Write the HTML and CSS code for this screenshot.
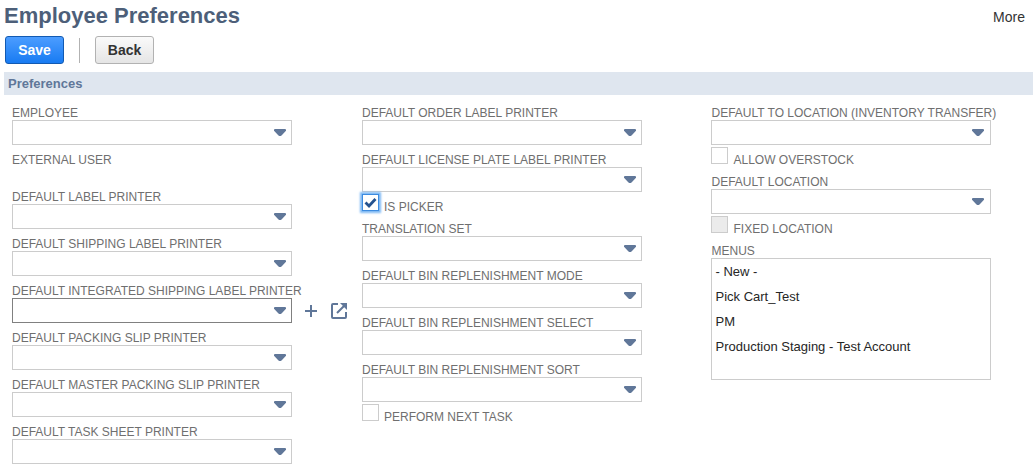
FILE: index.html
```html
<!DOCTYPE html>
<html lang="en">
<head>
<meta charset="utf-8">
<title>Employee Preferences</title>
<link rel="stylesheet" href="styles.css">
</head>
<body>
<svg class="defs" width="0" height="0"><symbol id="arrow" viewBox="0 0 12 7"><path d="M1 0h10q1 0 1 1v.8L7.500 6.500q-1.500 1-3 0L0 1.800V1Q0 0 1 0z" fill="#607799"/></symbol></svg>
<header class="header">
  <h1 class="title">Employee Preferences</h1>
  <a class="more">More</a>
</header>
<div class="actions">
  <button class="btn btn-primary">Save</button>
  <span class="divider"></span>
  <button class="btn">Back</button>
</div>
<h2 class="section">Preferences</h2>
<main class="columns">
  <div class="column">
    <div class="field"><span class="label">EMPLOYEE</span><div class="select"><svg class="arrow"><use href="#arrow"/></svg></div></div>
    <div class="field readonly"><span class="label">EXTERNAL USER</span></div>
    <div class="field"><span class="label">DEFAULT LABEL PRINTER</span><div class="select"><svg class="arrow"><use href="#arrow"/></svg></div></div>
    <div class="field"><span class="label">DEFAULT SHIPPING LABEL PRINTER</span><div class="select"><svg class="arrow"><use href="#arrow"/></svg></div></div>
    <div class="field"><span class="label">DEFAULT INTEGRATED SHIPPING LABEL PRINTER</span>
      <div class="row">
        <div class="select hovered"><svg class="arrow"><use href="#arrow"/></svg></div>
        <svg class="plus" width="12" height="12" viewBox="0 0 12 12"><path d="M6 0v12M0 6h12" stroke="#607799" stroke-width="2"/></svg>
        <svg class="open" width="16" height="16" viewBox="0 0 16 16" fill="none" stroke="#607799" stroke-width="2"><path d="M7 1H2Q1 1 1 2v12Q1 15 2 15h12q1 0 1-1V9M6 10l7-7"/><path d="M9 0H16v7z" fill="#607799" stroke="none"/></svg>
      </div>
    </div>
    <div class="field"><span class="label">DEFAULT PACKING SLIP PRINTER</span><div class="select"><svg class="arrow"><use href="#arrow"/></svg></div></div>
    <div class="field"><span class="label">DEFAULT MASTER PACKING SLIP PRINTER</span><div class="select"><svg class="arrow"><use href="#arrow"/></svg></div></div>
    <div class="field"><span class="label">DEFAULT TASK SHEET PRINTER</span><div class="select"><svg class="arrow"><use href="#arrow"/></svg></div></div>
  </div>
  <div class="column">
    <div class="field"><span class="label">DEFAULT ORDER LABEL PRINTER</span><div class="select"><svg class="arrow"><use href="#arrow"/></svg></div></div>
    <div class="field"><span class="label">DEFAULT LICENSE PLATE LABEL PRINTER</span><div class="select"><svg class="arrow"><use href="#arrow"/></svg></div></div>
    <div class="check"><span class="box focused"><svg width="13" height="11" viewBox="0 0 13 11"><path d="M1.500 5.500l3.500 3.500 6.500-7" fill="none" stroke="#24528f" stroke-width="2.800"/></svg></span><span class="label">IS PICKER</span></div>
    <div class="field"><span class="label">TRANSLATION SET</span><div class="select"><svg class="arrow"><use href="#arrow"/></svg></div></div>
    <div class="field"><span class="label">DEFAULT BIN REPLENISHMENT MODE</span><div class="select"><svg class="arrow"><use href="#arrow"/></svg></div></div>
    <div class="field"><span class="label">DEFAULT BIN REPLENISHMENT SELECT</span><div class="select"><svg class="arrow"><use href="#arrow"/></svg></div></div>
    <div class="field"><span class="label">DEFAULT BIN REPLENISHMENT SORT</span><div class="select"><svg class="arrow"><use href="#arrow"/></svg></div></div>
    <div class="check"><span class="box"></span><span class="label">PERFORM NEXT TASK</span></div>
  </div>
  <div class="column shifted">
    <div class="field"><span class="label">DEFAULT TO LOCATION (INVENTORY TRANSFER)</span><div class="select"><svg class="arrow"><use href="#arrow"/></svg></div></div>
    <div class="check"><span class="box"></span><span class="label">ALLOW OVERSTOCK</span></div>
    <div class="field"><span class="label">DEFAULT LOCATION</span><div class="select"><svg class="arrow"><use href="#arrow"/></svg></div></div>
    <div class="check"><span class="box disabled"></span><span class="label">FIXED LOCATION</span></div>
    <div class="field"><span class="label">MENUS</span>
      <ul class="listbox"><li>- New -</li><li>Pick Cart_Test</li><li>PM</li><li>Production Staging - Test Account</li></ul>
    </div>
  </div>
</main>
</body>
</html>
```
FILE: styles.css
```css
* { box-sizing: border-box; }
body { margin: 0; background: #fff; font-family: "Liberation Sans", Arial, sans-serif; overflow: hidden; }
.defs { display: block; }
.header { display: flex; justify-content: space-between; height: 36px; padding: 3px 10px 0 4px; }
.title { margin: 0; font-size: 22px; line-height: 25px; color: #4d5f79; }
.more { margin-top: 5px; font-size: 14px; line-height: 18px; color: #333; }
.actions { display: flex; align-items: center; height: 28px; margin-left: 5px; }
.btn { width: 59px; height: 28px; padding: 0; border: 1px solid #b2b2b2; border-radius: 3px; background: linear-gradient(#fafafa, #e5e5e5); font: bold 14px "Liberation Sans", Arial, sans-serif; color: #333; }
.btn-primary { border-color: #125ab2; background: linear-gradient(#4c9dff, #187bf2); color: #fff; }
.divider { width: 1px; height: 25px; margin: 0 15px; background: #b2b2b2; }
.section { height: 23px; margin: 8px 2px 0 4px; padding-left: 4px; background: #dfe6ef; font-size: 13px; line-height: 23px; color: #607799; }
.columns { display: grid; grid-template-columns: 350px 349px 280px; padding: 3px 0 0 12px; }
.field { padding-top: 7px; }
.label { display: block; height: 15px; font-size: 12px; line-height: 17px; color: #6f6f6f; white-space: nowrap; }
.shifted .label { padding-left: 0.5px; }
.readonly { height: 37px; }
.select { display: flex; align-items: center; justify-content: flex-end; width: 280px; height: 25px; padding-right: 5px; border: 1px solid #ccc; }
.shifted .select { padding-right: 6px; }
.hovered { border-color: #808080; }
.arrow { width: 12px; height: 7px; }
.row { display: flex; align-items: center; }
.plus { margin-left: 13px; }
.open { margin-left: 14px; }
.check { display: flex; gap: 5px; height: 22px; padding-top: 2px; }
.check .label { margin-top: 5px; }
.box { display: flex; align-items: center; justify-content: center; width: 17px; height: 17px; border: 1px solid #ccc; }
.focused { border-color: #3c8be0; box-shadow: 0 0 2px 2px #7db8f3; }
.disabled { background: #ebebeb; }
.listbox { width: 280px; height: 122px; margin: 0; padding: 0 0 0 3.500px; border: 1px solid #ccc; list-style: none; font-size: 13px; line-height: 25px; color: #262626; }
```
